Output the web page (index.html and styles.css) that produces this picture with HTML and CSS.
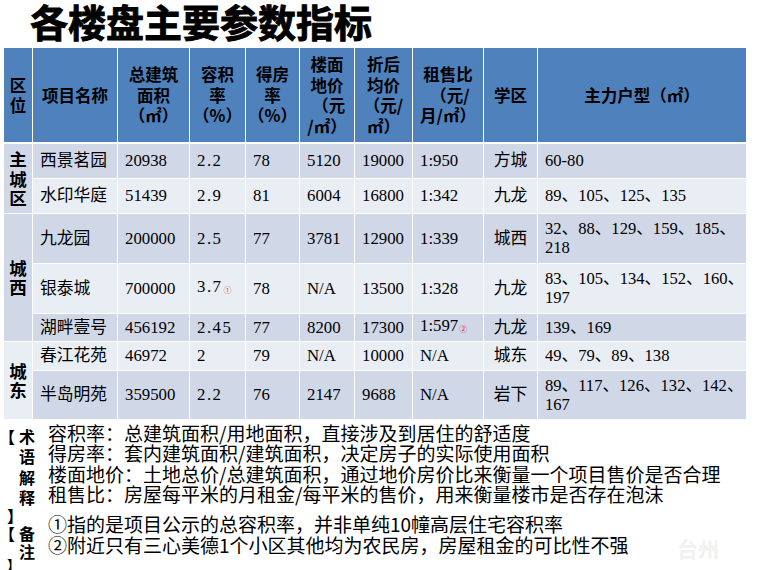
FILE: index.html
```html
<!DOCTYPE html>
<html lang="zh-CN">
<head>
<meta charset="utf-8">
<title>各楼盘主要参数指标</title>
<link rel="stylesheet" href="styles.css">
</head>
<body>
<h1 class="title">各楼盘主要参数指标</h1>
<table class="grid">
  <colgroup>
    <col class="c-zone"><col class="c-name"><col class="c-area"><col class="c-far"><col class="c-eff">
    <col class="c-land"><col class="c-avg"><col class="c-rent"><col class="c-school"><col class="c-type">
  </colgroup>
  <thead>
    <tr class="head">
      <th>区<br>位</th>
      <th>项目名称</th>
      <th>总建筑<br>面积<br>（㎡）</th>
      <th>容积<br>率<br>（%）</th>
      <th>得房<br>率<br>（%）</th>
      <th>楼面<br>地价<br>&nbsp;（元<br>/㎡）</th>
      <th>折后<br>均价<br>（元/<br>㎡）</th>
      <th>租售比<br>&nbsp;（元/<br>月/㎡）</th>
      <th>学区</th>
      <th>主力户型（㎡）</th>
    </tr>
  </thead>
  <tbody>
    <tr class="dark h35">
      <td class="zone" rowspan="2">主<br>城<br>区</td>
      <td>西景茗园</td><td>20938</td><td class="dec">2.2</td><td>78</td><td>5120</td><td>19000</td><td>1:950</td><td class="center">方城</td><td class="type">60-80</td>
    </tr>
    <tr class="light h35">
      <td>水印华庭</td><td>51439</td><td class="dec">2.9</td><td>81</td><td>6004</td><td>16800</td><td>1:342</td><td class="center">九龙</td><td class="type">89、105、125、135</td>
    </tr>
    <tr class="dark h50">
      <td class="zone" rowspan="3">城<br>西</td>
      <td>九龙园</td><td>200000</td><td class="dec">2.5</td><td>77</td><td>3781</td><td>12900</td><td>1:339</td><td class="center">城西</td><td class="type">32、88、129、159、185、218</td>
    </tr>
    <tr class="light h50">
      <td>银泰城</td><td>700000</td><td class="dec">3.7<span class="mark m1">①</span></td><td>78</td><td>N/A</td><td>13500</td><td>1:328</td><td class="center">九龙</td><td class="type">83、105、134、152、160、197</td>
    </tr>
    <tr class="dark h28">
      <td>湖畔壹号</td><td>456192</td><td class="dec">2.45</td><td>77</td><td>8200</td><td>17300</td><td>1:597<span class="mark m2">②</span></td><td class="center">九龙</td><td class="type">139、169</td>
    </tr>
    <tr class="light h29">
      <td class="zone light" rowspan="2">城<br>东</td>
      <td>春江花苑</td><td>46972</td><td>2</td><td>79</td><td>N/A</td><td>10000</td><td>N/A</td><td class="center">城东</td><td class="type">49、79、89、138</td>
    </tr>
    <tr class="dark h49">
      <td>半岛明苑</td><td>359500</td><td class="dec">2.2</td><td>76</td><td>2147</td><td>9688</td><td>N/A</td><td class="center">岩下</td><td class="type">89、117、126、132、142、167</td>
    </tr>
  </tbody>
</table>
<div class="notes">
  <div class="label">
    <div class="lrow first"><span class="br open">【</span><span class="ch">术</span></div>
    <div class="lrow"><span class="br"></span><span class="ch">语</span></div>
    <div class="lrow"><span class="br"></span><span class="ch">解</span></div>
    <div class="lrow"><span class="br"></span><span class="ch">释</span></div>
    <div class="lrow gap"><span class="br close">】</span></div>
    <div class="lrow"><span class="br open">【</span><span class="ch">备</span></div>
    <div class="lrow tight"><span class="br"></span><span class="ch">注</span></div>
    <div class="lrow end"><span class="br close">】</span></div>
  </div>
  <div class="lines">
    <div class="group">
      <p>容积率：总建筑面积/用地面积，直接涉及到居住的舒适度</p>
      <p>得房率：套内建筑面积/建筑面积，决定房子的实际使用面积</p>
      <p>楼面地价：土地总价/总建筑面积，通过地价房价比来衡量一个项目售价是否合理</p>
      <p>租售比：房屋每平米的月租金/每平米的售价，用来衡量楼市是否存在泡沫</p>
    </div>
    <div class="group">
      <p>①指的是项目公示的总容积率，并非单纯10幢高层住宅容积率</p>
      <p>②附近只有三心美德1个小区其他均为农民房，房屋租金的可比性不强</p>
    </div>
  </div>
</div>
<div class="watermark">台州</div>
</body>
</html>
```

FILE: styles.css
```css
html, body {
  margin: 0;
  padding: 0;
}
body {
  width: 780px;
  height: 570px;
  overflow: hidden;
  background: #ffffff;
  color: #000000;
  font-family: "Liberation Serif", "Noto Sans CJK SC", serif;
  position: relative;
}

.title {
  margin: 0 0 5px 30px;
  font-family: "Noto Sans CJK SC", sans-serif;
  font-size: 38px;
  line-height: 42px;
  font-weight: 700;
  letter-spacing: 0;
  -webkit-text-stroke: 0.9px #000000;
}

.grid {
  margin-left: 3px;
  width: 743px;
  table-layout: fixed;
  border-collapse: collapse;
}
.c-zone { width: 29px; }
.c-name { width: 85px; }
.c-area { width: 72px; }
.c-far { width: 56px; }
.c-eff { width: 54px; }
.c-land { width: 55px; }
.c-avg { width: 58px; }
.c-rent { width: 71px; }
.c-school { width: 54px; }
.c-type { width: 209px; }

.grid th,
.grid td {
  border: 1px solid #ffffff;
  vertical-align: middle;
}

.head th {
  height: 94px;
  padding: 0 1px;
  background: #4f81bd;
  border-bottom: 2px solid #ffffff;
  font-family: "Noto Sans CJK SC", sans-serif;
  font-size: 16.5px;
  line-height: 20.5px;
  font-weight: 700;
  text-align: center;
}

.grid td {
  padding: 0 2px 0 7px;
  font-size: 16.8px;
  line-height: 19px;
  text-align: left;
  white-space: normal;
}
.grid td.type {
  font-size: 16.6px;
  padding: 0 0 0 7px;
}
.grid td.dec {
  letter-spacing: 1.5px;
}
.dark td { background: #d0d8e8; }
.light td { background: #e9edf4; }
.grid td.zone {
  background: #d0d8e8;
  padding: 0;
  text-align: center;
  font-family: "Noto Sans CJK SC", sans-serif;
  font-weight: 700;
  font-size: 17.5px;
  line-height: 19.5px;
}
.grid td.zone.light { background: #e9edf4; }
.grid td.center {
  text-align: center;
  padding: 0;
}

.h35 { height: 35px; }
.h50 { height: 50px; }
.h28 { height: 28px; }
.h29 { height: 29px; }
.h49 { height: 49px; }

.mark {
  font-family: "Noto Sans CJK SC", sans-serif;
  font-size: 8px;
  margin-left: 1px;
  letter-spacing: 0;
  vertical-align: -1px;
}
.m1 { color: #e0502a; }
.m2 { color: #e8203c; }

.notes {
  display: flex;
  margin-top: 3px;
}
.label {
  width: 48px;
  padding-left: 6px;
  padding-top: 3px;
  box-sizing: border-box;
  display: flex;
  flex-direction: column;
  font-family: "Noto Sans CJK SC", sans-serif;
  font-weight: 700;
  font-size: 16px;
  line-height: 20px;
}
.lrow {
  display: flex;
  height: 20.5px;
  line-height: 20.5px;
}
.lrow.gap {
  height: 15px;
  line-height: 15px;
}
.lrow.tight {
  height: 17px;
  line-height: 17px;
}
.lrow.end {
  height: 8px;
  line-height: 9px;
  font-size: 13px;
}
.br {
  width: 13px;
  overflow: visible;
  display: inline-block;
  white-space: nowrap;
}
.br.open {
  text-indent: -7px;
}
.br.close {
  text-indent: 1px;
}
.ch {
  display: inline-block;
}

.lines {
  font-family: "Noto Sans CJK SC", sans-serif;
  font-size: 19px;
  line-height: 20.5px;
}
.lines p {
  margin: 0;
  white-space: nowrap;
}
.group + .group {
  margin-top: 9.5px;
}

.watermark {
  position: absolute;
  left: 677px;
  top: 533px;
  font-family: "Noto Sans CJK SC", sans-serif;
  font-weight: 700;
  font-size: 21px;
  color: #f1f1f1;
}
```
